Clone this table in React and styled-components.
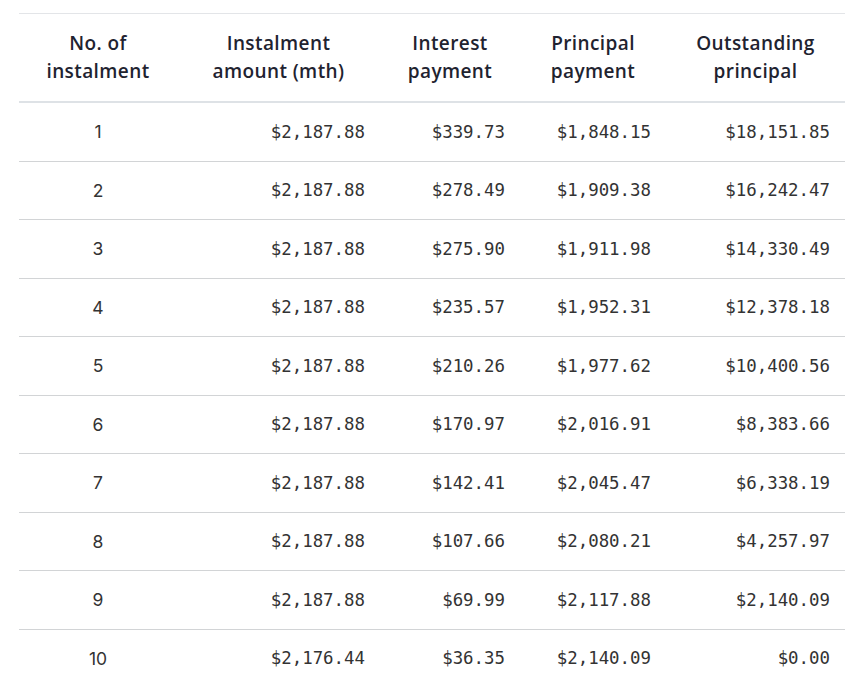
import React from "react";
import styled, { createGlobalStyle } from "styled-components";

const GlobalStyle = createGlobalStyle`
  html, body {
    margin: 0;
    padding: 0;
    background: #ffffff;
  }
`;

const Page = styled.div`
  padding: 13px 19px 0;
`;

const Table = styled.table`
  width: 100%;
  table-layout: fixed;
  border-collapse: separate;
  border-spacing: 0;
`;

const HeadCell = styled.th`
  height: 85px;
  padding: 0 2px 2px;
  border-top: 1px solid #e3e5e8;
  border-bottom: 2px solid #dee2e6;
  font-family: "Open Sans", Inter, sans-serif;
  font-weight: 600;
  font-size: 19px;
  letter-spacing: 0.4px;
  line-height: 28px;
  color: #1f2330;
  text-align: center;
  vertical-align: middle;
  box-sizing: content-box;
`;

const Cell = styled.td`
  height: 57.5px;
  padding: 0 15px;
  border-bottom: 1px solid #d2d4d6;
  color: #333;
  vertical-align: middle;
  text-align: ${(p) => (p.$num ? "right" : "center")};
  font-family: ${(p) =>
    p.$num ? '"DejaVu Sans Mono", monospace' : 'Inter, "Noto Sans", sans-serif'};
  font-size: ${(p) => (p.$num ? "17.4px" : "17.5px")};
  box-sizing: content-box;

  tr:last-child & {
    border-bottom: none;
  }
`;

const columns = [
  { title: ["No. of", "instalment"], width: 158 },
  { title: ["Instalment", "amount (mth)"], width: 203 },
  { title: ["Interest", "payment"], width: 140 },
  { title: ["Principal", "payment"], width: 146 },
  { title: ["Outstanding", "principal"], width: 179 },
];

const rows = [
  ["1", "$2,187.88", "$339.73", "$1,848.15", "$18,151.85"],
  ["2", "$2,187.88", "$278.49", "$1,909.38", "$16,242.47"],
  ["3", "$2,187.88", "$275.90", "$1,911.98", "$14,330.49"],
  ["4", "$2,187.88", "$235.57", "$1,952.31", "$12,378.18"],
  ["5", "$2,187.88", "$210.26", "$1,977.62", "$10,400.56"],
  ["6", "$2,187.88", "$170.97", "$2,016.91", "$8,383.66"],
  ["7", "$2,187.88", "$142.41", "$2,045.47", "$6,338.19"],
  ["8", "$2,187.88", "$107.66", "$2,080.21", "$4,257.97"],
  ["9", "$2,187.88", "$69.99", "$2,117.88", "$2,140.09"],
  ["10", "$2,176.44", "$36.35", "$2,140.09", "$0.00"],
];

const App = () => (
  <Page>
    <GlobalStyle />
    <Table>
      <colgroup>
        {columns.map((c, i) => (
          <col key={i} style={{ width: c.width }} />
        ))}
      </colgroup>
      <thead>
        <tr>
          {columns.map((c, i) => (
            <HeadCell key={i}>
              {c.title[0]}
              <br />
              {c.title[1]}
            </HeadCell>
          ))}
        </tr>
      </thead>
      <tbody>
        {rows.map((r) => (
          <tr key={r[0]}>
            {r.map((v, i) => (
              <Cell key={i} $num={i > 0}>
                {v}
              </Cell>
            ))}
          </tr>
        ))}
      </tbody>
    </Table>
  </Page>
);

export default App;
